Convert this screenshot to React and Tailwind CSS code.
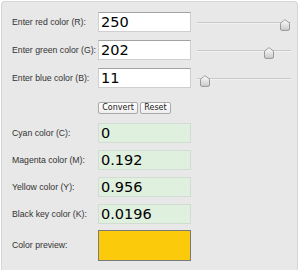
import React from "react";

const inputs = [
  { label: "Enter red color (R):", value: 250 },
  { label: "Enter green color (G):", value: 202 },
  { label: "Enter blue color (B):", value: 11 },
];

const outputs = [
  { label: "Cyan color (C):", value: "0" },
  { label: "Magenta color (M):", value: "0.192" },
  { label: "Yellow color (Y):", value: "0.956" },
  { label: "Black key color (K):", value: "0.0196" },
];

function Thumb() {
  return (
    <svg width="10" height="12" viewBox="0 0 10 12">
      <defs>
        <linearGradient id="thumbFill" x1="0" y1="0" x2="0" y2="1">
          <stop offset="0" stopColor="#ffffff" />
          <stop offset="1" stopColor="#c9c9c9" />
        </linearGradient>
      </defs>
      <path
        d="M0.5 4.2 L5 0.6 L9.5 4.2 V10 Q9.5 11.4 8 11.4 H2 Q0.5 11.4 0.5 10 Z"
        fill="url(#thumbFill)"
        stroke="#9a9a9a"
        strokeWidth="1"
      />
    </svg>
  );
}

function Slider({ value }) {
  const left = (value / 255) * 85 + 4.5 - 5;
  return (
    <div className="relative ml-[6px] h-[20px] w-[94px]">
      <div className="absolute left-0 right-0 top-[10px] h-px bg-[#c9c9c9]" />
      <div className="absolute left-0 right-0 top-[11px] h-px bg-[#f2f2f2]" />
      <div className="absolute top-[7px]" style={{ left: `${left}px` }}>
        <Thumb />
      </div>
    </div>
  );
}

function Label({ children }) {
  return (
    <div className="w-[86px] shrink-0 text-[8.7px] leading-none text-[#333] [font-family:'Liberation_Sans',Arial,sans-serif]">
      {children}
    </div>
  );
}

export default function App() {
  return (
    <div className="h-[270px] w-[300px] bg-white pl-[1px] pr-[2px] pt-[1px]">
      <div className="h-[269px] rounded-t-[4px] border border-b-0 border-[#d6d6d6] bg-[#e8e8e8] pl-[10px] pt-[10px]">
        <div className="flex flex-col gap-[8px]">
          {inputs.map((row) => (
            <div className="flex h-[20px] items-center" key={row.label}>
              <Label>{row.label}</Label>
              <div className="flex h-[20px] w-[93px] items-center border border-[#cfcfcf] border-t-[#a3a3a3] bg-white pl-[2px] text-[14.5px] leading-none text-black [font-family:'DejaVu_Sans',sans-serif]">
                {row.value}
              </div>
              <Slider value={row.value} />
            </div>
          ))}
        </div>

        <div className="ml-[86px] mt-[14px] flex gap-[2px] text-[8px] leading-none text-[#222] [font-family:'DejaVu_Sans',sans-serif]">
          <button className="flex h-[12px] w-[40px] items-center justify-center rounded-[2px] border border-[#a9a9a9] bg-gradient-to-b from-white to-[#eeeeee]">
            Convert
          </button>
          <button className="flex h-[12px] w-[31px] items-center justify-center rounded-[2px] border border-[#a9a9a9] bg-gradient-to-b from-white to-[#eeeeee]">
            Reset
          </button>
        </div>

        <div className="mt-[9px] flex flex-col gap-[7px]">
          {outputs.map((row) => (
            <div className="flex h-[20px] items-center" key={row.label}>
              <Label>{row.label}</Label>
              <div className="flex h-[20px] w-[93px] items-center overflow-hidden border border-[#d3dcd3] bg-[#dff0df] pl-[2px] text-[14.5px] leading-none text-black [font-family:'DejaVu_Sans',sans-serif]">
                {row.value}
              </div>
            </div>
          ))}
          <div className="-mt-[1px] flex h-[31px] items-center">
            <Label>Color preview:</Label>
            <div className="h-[31px] w-[93px] border border-[#7a7a7a] bg-[#faca0b]" />
          </div>
        </div>
      </div>
    </div>
  );
}
